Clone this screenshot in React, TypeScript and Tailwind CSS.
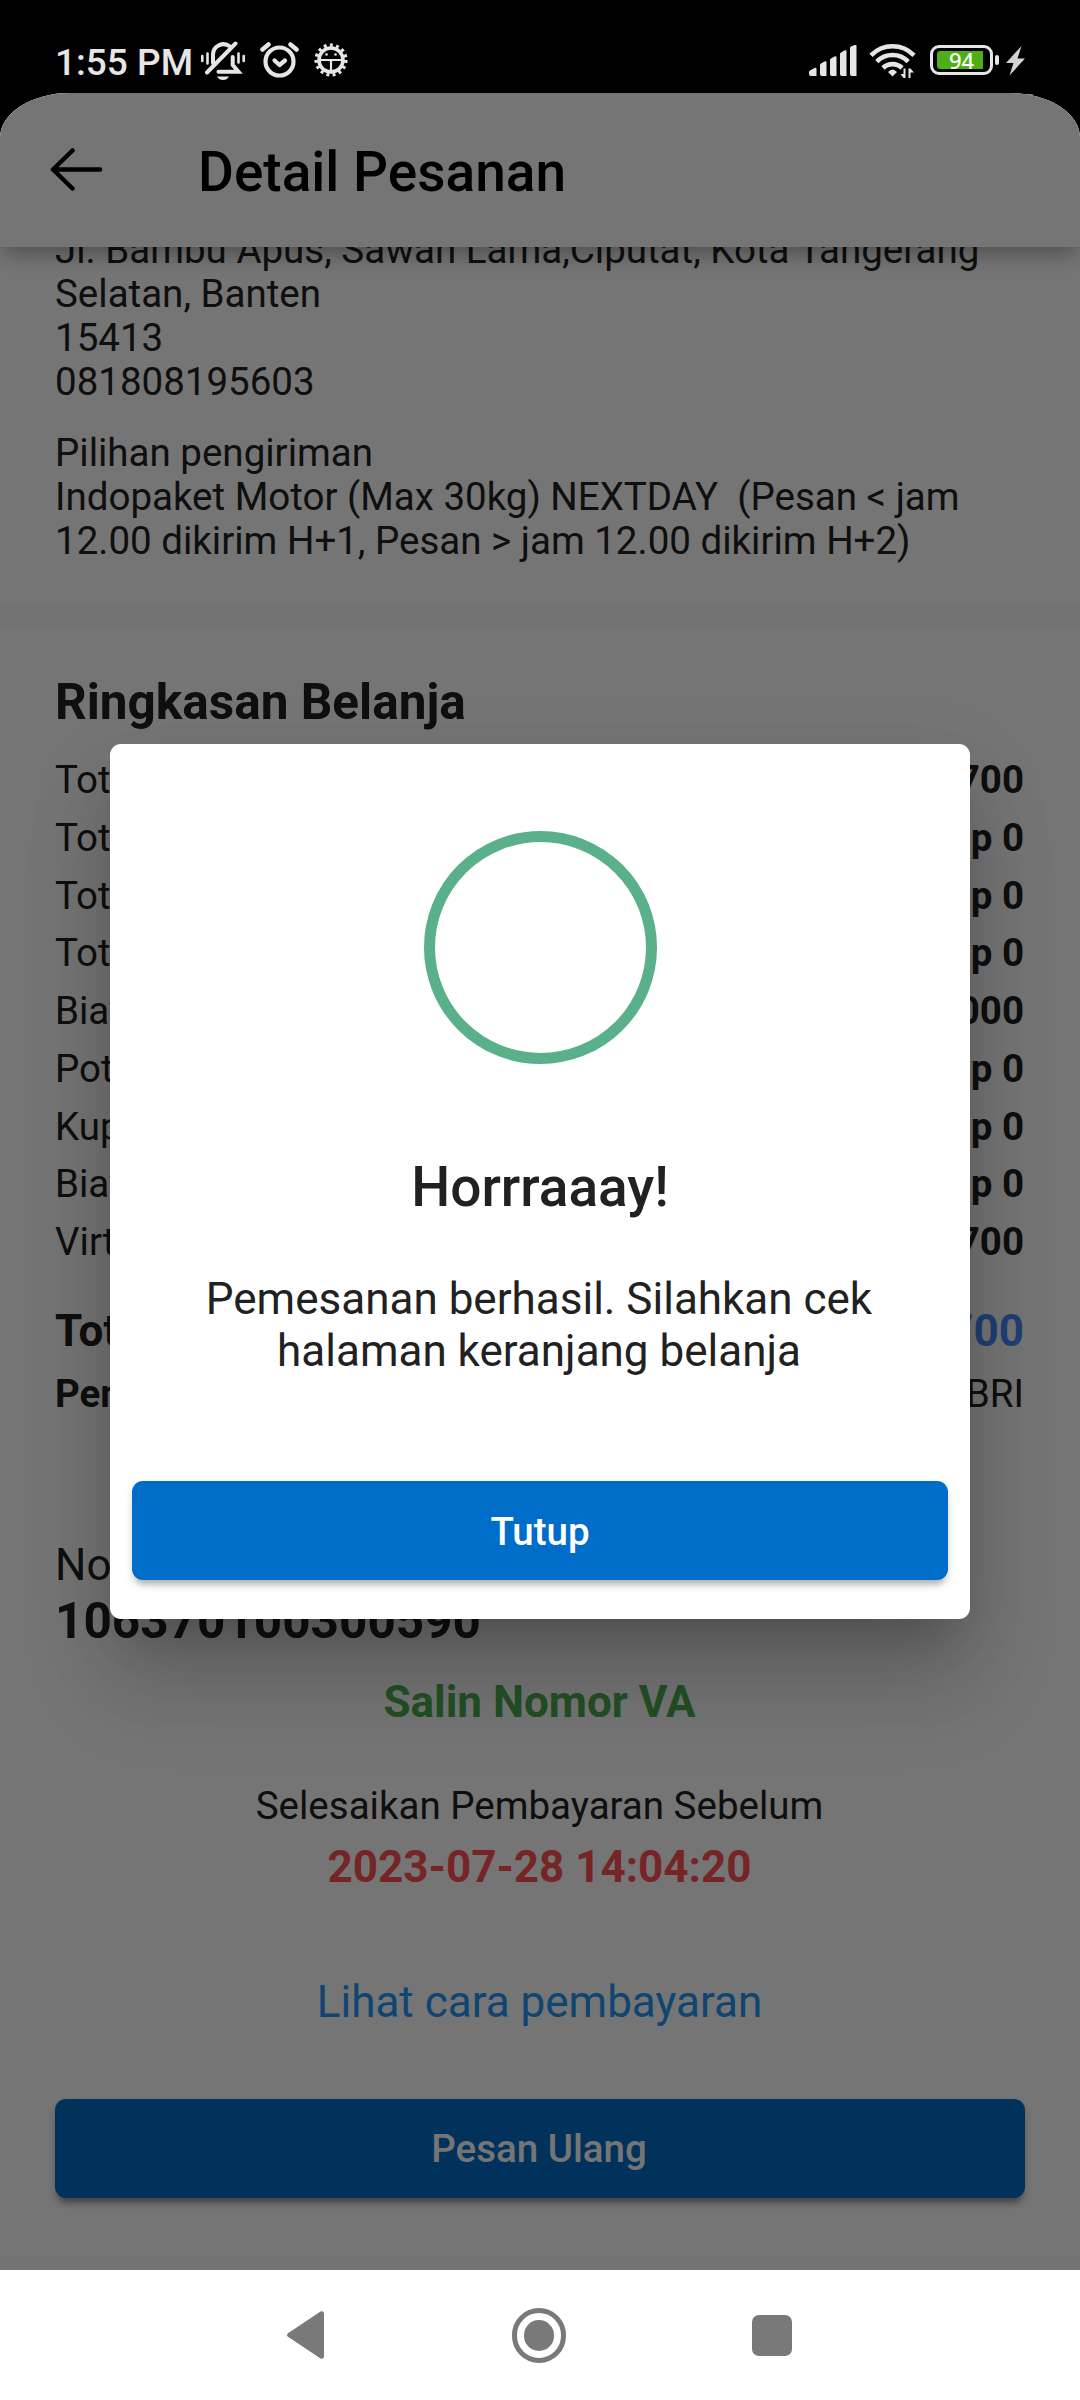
import React from "react";

const rows: [string, string][] = [
  ["Total Harga", "Rp 50.700"],
  ["Total Diskon", "Rp 0"],
  ["Total Voucher", "Rp 0"],
  ["Total Poin", "Rp 0"],
  ["Biaya Kirim", "Rp 15.000"],
  ["Potongan", "Rp 0"],
  ["Kupon", "Rp 0"],
  ["Biaya Layanan", "Rp 0"],
  ["Virtual Account", "Rp 65.700"],
];

function StatusBar() {
  return (
    <div className="relative z-20 h-[93px] flex items-start text-[#e6e6e6]">
      <span className="ml-[55px] mt-[41px] w-[145px] text-[37px] leading-[44px] font-medium whitespace-nowrap">1:55 PM</span>
      <svg className="mt-[41px] w-[46px] h-[40px]" viewBox="0 0 46 40" fill="none" stroke="currentColor" strokeWidth="4" strokeLinecap="round">
        <path d="M13 22V14a10.500 10.500 0 0 1 17-8.500M7 31.500L35.500 2.500M18.500 30.800H38.500L32.700 24V16" />
        <path d="M2.300 15v5M7.500 12.500v10M38.500 12.500v9M43.700 15v5" strokeWidth="2.600" />
        <path d="M17 35.500h12q-2 3.500-6 3.500t-6-3.500z" fill="currentColor" stroke="none" />
      </svg>
      <svg className="ml-[14px] mt-[41px] w-[40px] h-[40px]" viewBox="0 0 40 40" fill="none" stroke="currentColor" strokeWidth="4.200" strokeLinecap="round">
        <circle cx="19.500" cy="20.500" r="14" />
        <path d="M2.500 8.500l6-5M36.500 8.500l-6-5" strokeWidth="4.500" />
        <path d="M14.500 19.500l5 4.500 5.500-4.500" strokeLinejoin="round" />
      </svg>
      <svg className="ml-[13px] mt-[42px] w-[36px] h-[36px]" viewBox="-18 -18 36 36" fill="none" stroke="currentColor">
        <circle r="12" strokeWidth="3.600" />
        <circle r="14.800" strokeWidth="3.600" strokeDasharray="2.900 3.300" />
        <path d="M-11 0H11M0 0V12" strokeWidth="2.200" />
        <circle cx="-4.500" cy="-5.500" r="1.300" fill="currentColor" stroke="none" />
        <circle cx="4.500" cy="-5.500" r="1.300" fill="currentColor" stroke="none" />
      </svg>
      <svg className="ml-auto mt-[45px] w-[48px] h-[31px]" viewBox="0 0 48 31" fill="currentColor">
        <path d="M0 27q0-1 1-1.500l4.500-2.500q2-.8 2 1v7H2q-2 0-2-2zM11 20q0-1 1-1.500l3.500-2q2-.8 2 1v13.500h-4.500q-2 0-2-2zM21 15q0-1 1-1.500l3.500-2q2-.8 2 1v18.500h-4.500q-2 0-2-2zM31 9q0-1 1-1.500l3.500-2q2-.8 2 1v24.500h-4.500q-2 0-2-2zM41 3q0-1 1-1.500l3.500-1.500q2-.8 2 1v30h-4.500q-2 0-2-2z" />
      </svg>
      <svg className="ml-[12px] mt-[43px] w-[48px] h-[36px]" viewBox="0 0 48 36" fill="none" stroke="currentColor" strokeWidth="4.600">
        <path d="M2 12.300a30 30 0 0 1 43 0M7.800 18.600a22 22 0 0 1 31.400 0M14 25a13.500 13.500 0 0 1 19 0" />
        <path d="M19 29q4.500-5 9 0l-4.500 4.500z" fill="currentColor" stroke="none" />
        <path d="M36.500 25.500v9.500h-2l-3-4h3v-5.500zM39.500 35v-9.500h2l3.500 4h-3.500v5.500z" fill="currentColor" stroke="none" />
      </svg>
      <div className="ml-[13px] mt-[45px] w-[63px] h-[30px] rounded-[9px] border-[3px] border-current py-[3px] pl-[4px]">
        <div className="flex items-center justify-center w-[46px] h-[18px] bg-[#4caf16] rounded-l-[3px] pl-[3px] font-['Noto_Sans',sans-serif] text-[22px] font-medium leading-none text-white">94</div>
      </div>
      <div className="w-[4px] h-[10px] mt-[55px] ml-[2px] bg-current rounded-[2px]" />
      <svg className="ml-[7px] mr-[55px] mt-[46px] w-[19px] h-[30px]" viewBox="0 0 19 30" fill="#d2d2d2">
        <path d="M15.500 0L0 17h7.500L3.500 29.500 19 12.500h-7.500z" />
      </svg>
    </div>
  );
}

function NavigationBar() {
  return (
    <nav className="relative z-20 h-[130px] bg-white flex items-center">
      <svg className="ml-[287px] w-[37px] h-[48px]" viewBox="0 0 37 48" fill="#797979">
        <path d="M1 22.200L33.500.6q3-1.300 3.500 2v42.800q-.5 3.300-3.500 2L1 25.800q-2-1.800 0-3.600z" />
      </svg>
      <div className="ml-[188px] w-[54px] h-[55px] rounded-full border-[5px] border-[#797979] flex items-center justify-center">
        <div className="w-[30px] h-[31px] rounded-full bg-[#797979]" />
      </div>
      <div className="ml-[186px] w-[40px] h-[41px] rounded-[7px] bg-[#797979]" />
    </nav>
  );
}

function SuccessDialog() {
  return (
    <div className="absolute left-[110px] top-[744px] z-30 w-[860px] h-[875px] bg-white rounded-[11px] px-[22px] flex flex-col items-center text-center text-[#212121] shadow-[0_30px_42px_-19px_rgba(0,0,0,0.18),0_66px_95px_0px_rgba(0,0,0,0.14),0_30px_90px_6px_rgba(0,0,0,0.08)]">
      <div className="mt-[87px] w-[233px] h-[233px] rounded-full border-[11px] border-[#5ab08a]" />
      <h2 className="mt-[91px] text-[55px] leading-[64px] font-medium">Horrraaay!</h2>
      <p className="mt-[54px] mr-[2px] w-[700px] text-[44px] leading-[52px]">
        Pemesanan berhasil. Silahkan cek
        <br />
        halaman keranjang belanja
      </p>
      <button className="mt-[104px] w-full h-[99px] pt-[2px] rounded-[11px] bg-[#006ec8] text-white text-[38.5px] font-medium shadow-[0_8px_6px_-4px_rgba(0,0,0,0.2),0_5px_8px_rgba(0,0,0,0.14)]">
        Tutup
      </button>
    </div>
  );
}

export default function App() {
  return (
    <div className="relative w-[1080px] h-[2400px] overflow-hidden bg-black font-['Roboto',sans-serif] text-[#212121]">
      <StatusBar />
      <div className="relative h-[2177px] bg-white overflow-hidden [border-top-left-radius:70px_45px] [border-top-right-radius:70px_45px]">
        <header className="relative z-10 h-[154px] bg-white flex items-center shadow-[0_9px_22px_-3px_rgba(0,0,0,0.36)] text-black">
          <svg className="ml-[50px] w-[53px] h-[44px]" viewBox="0 0 53 44" fill="none" stroke="currentColor" strokeWidth="4.500" strokeLinecap="round" strokeLinejoin="round">
            <path d="M22.500 2.500L3 21.500l19.500 19M3 21.500h47" />
          </svg>
          <h1 className="ml-[95px] mt-[4px] text-[55px] font-medium">Detail Pesanan</h1>
        </header>
        <main className="-mt-[19px] flex flex-col text-[38.5px] leading-[44px]">
          <section className="px-[55px] h-[377px]">
            <p>Jl. Bambu Apus, Sawah Lama,Ciputat, Kota Tangerang<br />Selatan, Banten<br />15413<br />081808195603</p>
            <p className="mt-[27px] whitespace-pre">{"Pilihan pengiriman\nIndopaket Motor (Max 30kg) NEXTDAY  (Pesan < jam\n12.00 dikirim H+1, Pesan > jam 12.00 dikirim H+2)"}</p>
          </section>
          <div className="h-[25px] bg-[#fafafa]" />
          <section className="pl-[55px] pr-[56px] pt-[43px] h-[1626px] flex flex-col">
            <h2 className="text-[49.5px] leading-[58px] font-bold">Ringkasan Belanja</h2>
            <div className="mt-[20px] h-[520px] flex flex-col">
              {rows.map(([label, value]) => (
                <div key={label} className="h-[57.75px] leading-[58.8px] flex justify-between">
                  <span>{label}</span>
                  <span className="font-bold">{value}</span>
                </div>
              ))}
            </div>
            <div className="mt-[34px] h-[52px] leading-[52px] text-[44px] font-bold flex justify-between">
              <span>Total</span>
              <span className="text-[#448aff]">Rp 65.700</span>
            </div>
            <div className="mt-[15px] flex justify-between">
              <span className="font-bold">Pembayaran</span>
              <span>Virtual Account BRI</span>
            </div>
            <p className="mt-[123px] text-[44px] leading-[52px]">Nomor Virtual Account</p>
            <p className="mt-px text-[49.5px] leading-[58px] font-bold">106370100300590</p>
            <p className="mt-[26px] text-center text-[44px] leading-[52px] font-bold text-[#4caf50]">Salin Nomor VA</p>
            <p className="mt-[56px] text-center">Selesaikan Pembayaran Sebelum</p>
            <p className="mt-[13px] text-center text-[44px] leading-[52px] font-bold text-[#ff5252]">2023-07-28 14:04:20</p>
            <p className="mt-[83px] text-center text-[44px] leading-[52px] text-[#2196f3]">Lihat cara pembayaran</p>
            <button className="mt-[71px] -mr-px pr-[2px] pt-px h-[99px] shrink-0 rounded-[11px] bg-[#006ec8] text-white text-[38.5px] font-medium shadow-[0_8px_6px_-4px_rgba(0,0,0,0.3),0_5px_8px_rgba(0,0,0,0.2)]">
              Pesan Ulang
            </button>
          </section>
          <div className="h-[20px] bg-[#fafafa]" />
        </main>
        <div className="absolute inset-0 z-20 bg-black/54" />
      </div>
      <NavigationBar />
      <SuccessDialog />
    </div>
  );
}
